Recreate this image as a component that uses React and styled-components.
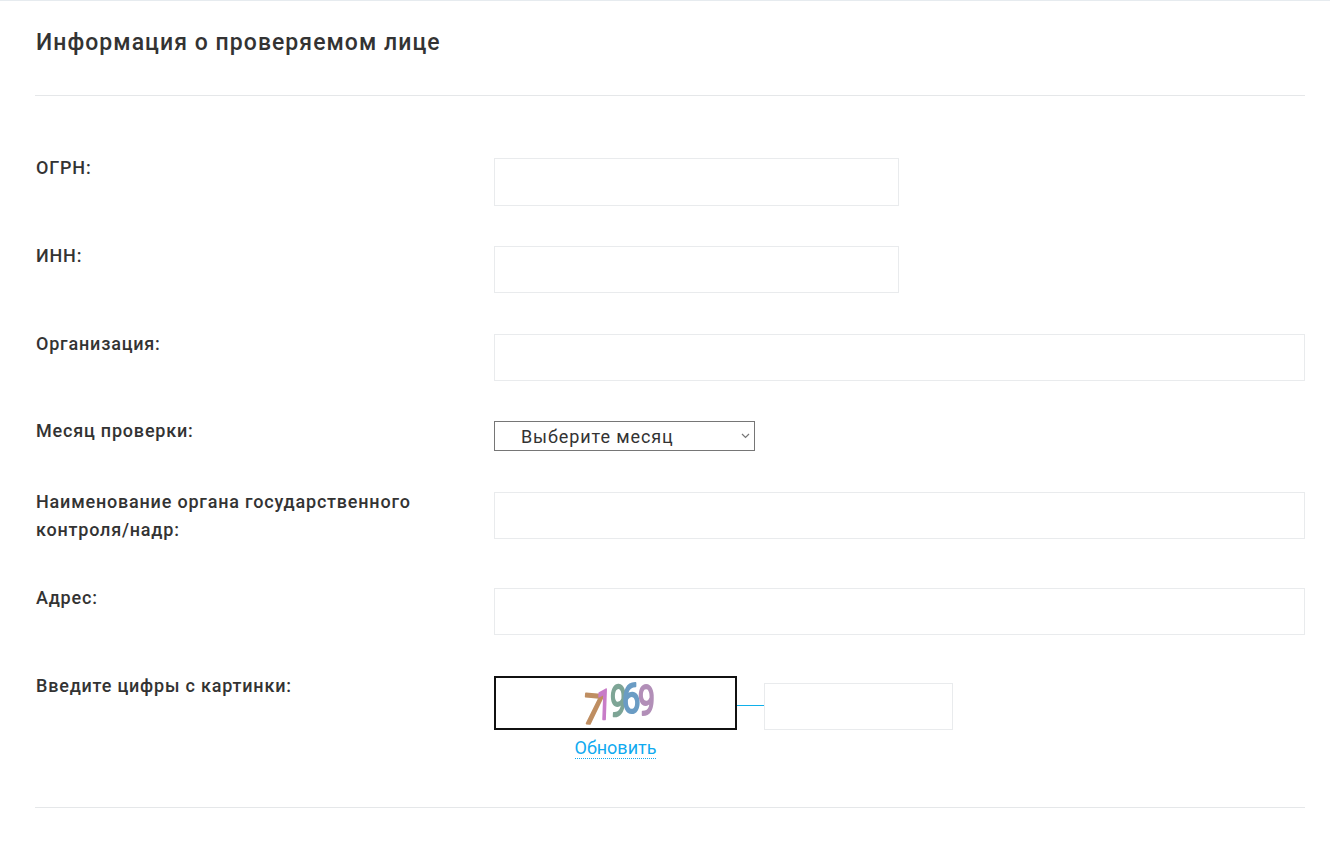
import React from "react";
import styled, { createGlobalStyle } from "styled-components";

const Global = createGlobalStyle`
  html, body { margin: 0; padding: 0; background: #fff; }
  body { font-family: Roboto, "Liberation Sans", sans-serif; color: #333; }
`;
const Page = styled.main`
  border-top: 1px solid #e6ebef;
  padding: 0 25px 0 35px;
  min-height: 841px;
  box-sizing: border-box;
`;
const Header = styled.header`
  height: 95px;
  border-bottom: 1px solid #e5e7e9;
  padding: 26px 0 0 1px;
  box-sizing: border-box;
`;
const Title = styled.h2`
  margin: 0;
  font-size: 23px;
  line-height: 32px;
  font-weight: 500;
  letter-spacing: 1.05px;
  color: #333;
`;
const Form = styled.form`
  padding-top: 62px;
  display: flex;
  flex-direction: column;
`;
const Row = styled.div`
  display: grid;
  grid-template-columns: 459px 1fr;
  margin-bottom: ${(p) => p.$gap}px;
`;
const Label = styled.label`
  margin-top: -4px;
  padding: 0 45px 0 1px;
  font-size: 18px;
  line-height: 28px;
  font-weight: 500;
  letter-spacing: 0.8px;
  color: #333;
`;
const Input = styled.input`
  display: block;
  box-sizing: border-box;
  width: ${(p) => p.$w || "100%"};
  height: ${(p) => p.$h || 47}px;
  border: 1px solid #e9ebed;
  background: #fff;
  outline: none;
`;
const chevron = `url("data:image/svg+xml,%3Csvg xmlns='http://www.w3.org/2000/svg' width='9' height='6'%3E%3Cpath d='M1 1l3.5 3.5L8 1' fill='none' stroke='%23777' stroke-width='1.2'/%3E%3C/svg%3E")`;
const Select = styled.select`
  display: block;
  width: 261px;
  height: 30px;
  box-sizing: border-box;
  appearance: none;
  border: 1px solid #767676;
  border-radius: 0;
  background: #fff ${chevron} no-repeat right 4px center;
  padding: 0 0 0 26px;
  font-family: inherit;
  font-size: 18px;
  letter-spacing: 0.9px;
  color: #333;
`;
const CaptchaArea = styled.div`
  display: flex;
  align-items: flex-start;
`;
const CaptchaCol = styled.div`
  width: 243px;
  display: flex;
  flex-direction: column;
  align-items: center;
`;
const CaptchaBox = styled.div`
  width: 243px;
  height: 54px;
  box-sizing: border-box;
  border: 2px solid #111;
  background: #fff;
  display: flex;
`;
const Refresh = styled.a`
  margin-top: 7px;
  font-size: 18px;
  line-height: 21px;
  color: #10aaf0;
  border-bottom: 1px dotted #10aaf0;
  text-decoration: none;
`;
const Dash = styled.span`
  width: 27px;
  height: 1px;
  margin-top: 29px;
  background: #10b0ea;
`;
const CaptchaInputWrap = styled.div`
  padding-top: 7px;
`;
const Footer = styled.hr`
  margin: 48px 0 0;
  border: 0;
  border-top: 1px solid #e5e7e9;
`;

const digits = [
  { c: "7", x: 86, y: 45, fill: "#bf8e62", size: 42, rot: 5, sx: 0.85 },
  { c: "1", x: 100, y: 41, fill: "#c87cc8", size: 42, rot: 2, sx: 0.62 },
  { c: "9", x: 113, y: 38, fill: "#7ea596", size: 44, rot: 3, sx: 0.68 },
  { c: "6", x: 126, y: 35, fill: "#6b9cc4", size: 42, rot: 0, sx: 0.78 },
  { c: "9", x: 142, y: 37, fill: "#b28fb8", size: 42, rot: 0, sx: 0.72 },
];

const CaptchaPicture = () => (
  <svg width="239" height="50" viewBox="0 0 239 50" aria-label="71969">
    <defs>
      <filter id="soft" x="-20%" y="-20%" width="140%" height="140%">
        <feGaussianBlur stdDeviation="0.7" />
      </filter>
    </defs>
    <g filter="url(#soft)" fontFamily="Roboto, sans-serif" fontWeight="400">
      {digits.map((d, i) => (
        <text
          key={i}
          fontSize={d.size}
          fill={d.fill}
          stroke={d.fill}
          strokeWidth="2"
          strokeLinejoin="round"
          transform={`translate(${d.x} ${d.y}) rotate(${d.rot}) scale(${d.sx} 1)`}
        >
          {d.c}
        </text>
      ))}
    </g>
  </svg>
);

export default function App() {
  return (
    <>
      <Global />
      <Page>
        <Header>
          <Title>Информация о проверяемом лице</Title>
        </Header>
        <Form>
          <Row $gap={40}>
            <Label>ОГРН:</Label>
            <Input $w="405px" $h={48} />
          </Row>
          <Row $gap={41}>
            <Label>ИНН:</Label>
            <Input $w="405px" />
          </Row>
          <Row $gap={40}>
            <Label>Организация:</Label>
            <Input />
          </Row>
          <Row $gap={41}>
            <Label>Месяц проверки:</Label>
            <Select defaultValue="">
              <option value="">Выберите месяц</option>
            </Select>
          </Row>
          <Row $gap={44}>
            <Label>Наименование органа государственного контроля/надр:</Label>
            <Input />
          </Row>
          <Row $gap={41}>
            <Label>Адрес:</Label>
            <Input />
          </Row>
          <Row $gap={0}>
            <Label>Введите цифры с картинки:</Label>
            <CaptchaArea>
              <CaptchaCol>
                <CaptchaBox>
                  <CaptchaPicture />
                </CaptchaBox>
                <Refresh href="#">Обновить</Refresh>
              </CaptchaCol>
              <Dash />
              <CaptchaInputWrap>
                <Input $w="189px" />
              </CaptchaInputWrap>
            </CaptchaArea>
          </Row>
          <Footer />
        </Form>
      </Page>
    </>
  );
}
